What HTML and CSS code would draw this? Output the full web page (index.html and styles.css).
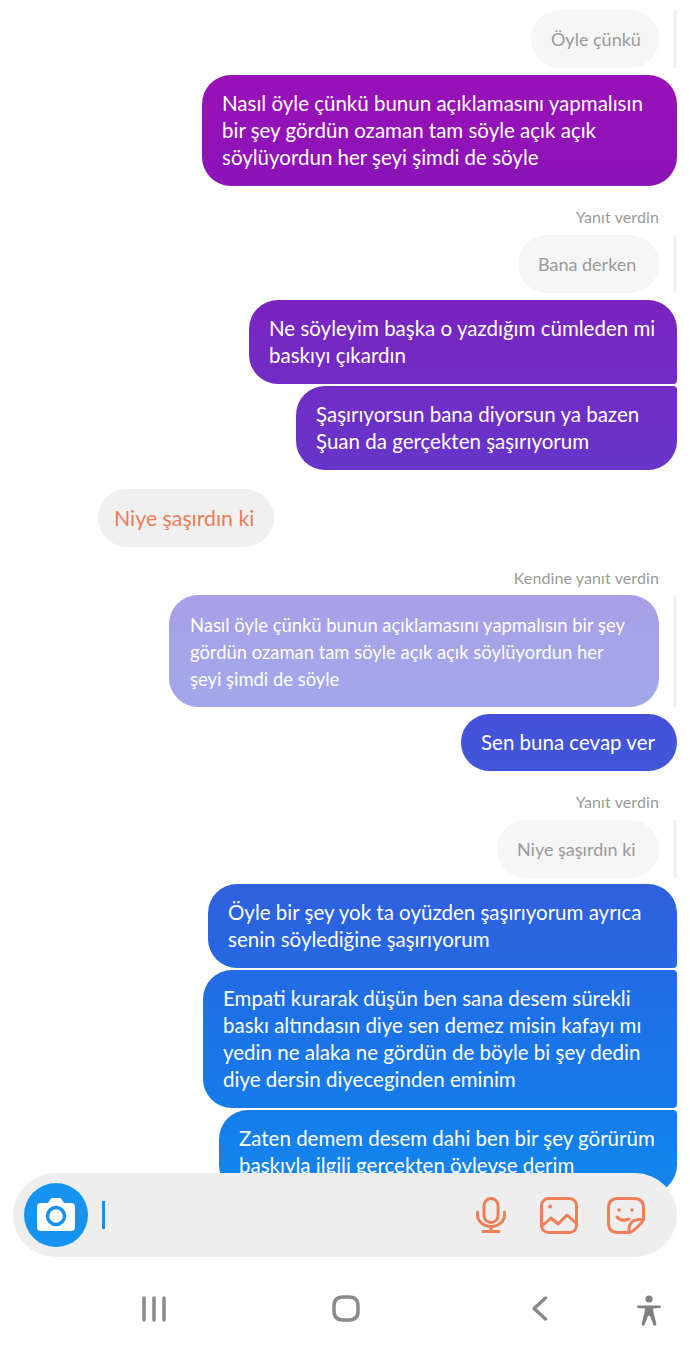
FILE: index.html
```html
<!DOCTYPE html>
<html lang="tr">
<head>
    <meta charset="UTF-8">
    <meta name="viewport" content="width=device-width, initial-scale=1.0">
    <title>Mesajlar</title>
    <link rel="stylesheet" href="styles.css">
</head>
<body>
<div class="screen">
    <div class="chat">
        <div class="quote first">
            <div class="bubble reply w-128">Öyle çünkü</div>
            <span class="bar"></span>
        </div>
        <div class="bubble sent gap w-475">Nasıl öyle çünkü bunun açıklamasını yapmalısın<br>bir şey gördün ozaman tam söyle açık açık<br>söylüyordun her şeyi şimdi de söyle</div>

        <div class="label">Yanıt verdin</div>
        <div class="quote">
            <div class="bubble reply w-141">Bana derken</div>
            <span class="bar"></span>
        </div>
        <div class="bubble sent gap has-next w-428">Ne söyleyim başka o yazdığım cümleden mi<br>baskıyı çıkardın</div>
        <div class="bubble sent tight w-381">Şaşırıyorsun bana diyorsun ya bazen<br>Şuan da gerçekten şaşırıyorum</div>

        <div class="bubble received w-176">Niye şaşırdın ki</div>

        <div class="label self-label">Kendine yanıt verdin</div>
        <div class="quote">
            <div class="bubble self w-490">Nasıl öyle çünkü bunun açıklamasını yapmalısın bir şey<br>gördün ozaman tam söyle açık açık söylüyordun her<br>şeyi şimdi de söyle</div>
            <span class="bar"></span>
        </div>
        <div class="bubble sent gap w-216">Sen buna cevap ver</div>

        <div class="label">Yanıt verdin</div>
        <div class="quote">
            <div class="bubble reply w-162">Niye şaşırdın ki</div>
            <span class="bar"></span>
        </div>
        <div class="bubble sent gap-small has-next w-469">Öyle bir şey yok ta oyüzden şaşırıyorum ayrıca<br>senin söylediğine şaşırıyorum</div>
        <div class="bubble sent tight has-next w-474">Empati kurarak düşün ben sana desem sürekli<br>baskı altındasın diye sen demez misin kafayı mı<br>yedin ne alaka ne gördün de böyle bi şey dedin<br>diye dersin diyeceginden eminim</div>
        <div class="bubble sent tight w-458">Zaten demem desem dahi ben bir şey görürüm<br>baskıyla ilgili gerçekten öylevse derim</div>
    </div>

    <div class="composer">
        <div class="camera">
            <svg width="40" height="34" viewBox="0 0 40 34">
                <path fill="#fff" d="M5 5h7l2.500-4q.6-1 2-1h7q1.400 0 2 1L28 5h7q4 0 4 4v20q0 4-4 4H5q-4 0-4-4V9q0-4 4-4z"/>
                <circle cx="20" cy="18" r="8.500" fill="none" stroke="#1593ee" stroke-width="3.500"/>
            </svg>
        </div>
        <span class="cursor"></span>
        <div class="tools">
            <svg class="mic" width="30" height="36" viewBox="0 0 30 36">
                <rect x="8" y="1.500" width="14" height="24" rx="7"/>
                <path d="M1.500 15v3a13.500 11.500 0 0 0 27 0v-3M15 29.500v5M7 34.500h16"/>
            </svg>
            <svg class="gallery" width="38" height="37" viewBox="0 0 38 37">
                <rect x="1.500" y="1.500" width="35" height="34" rx="7"/>
                <circle cx="10" cy="9.500" r="2" class="dot"/>
                <path d="M2 29l9-8 7 6 9-9 9 8"/>
            </svg>
            <svg class="sticker" width="38" height="37" viewBox="0 0 38 37">
                <path d="M22 35.500H11q-9.500 0-9.500-9.500V11q0-9.500 9.500-9.500h16q9.500 0 9.500 9.500v10q0 3-2 5l-8 7.500q-2 2-5 2z"/>
                <path d="M22 35.500v-3q0-9 9-10h5.500"/>
                <path d="M10 20q4 5 12 2"/>
                <circle cx="12" cy="13" r="1.800" class="dot"/>
                <circle cx="25" cy="13" r="1.800" class="dot"/>
            </svg>
        </div>
    </div>

    <div class="navbar">
        <svg class="nav-icon" width="24" height="27" viewBox="0 0 24 27">
            <path d="M2 3v22M12 3v22M22 3v22"/>
        </svg>
        <svg class="nav-icon" width="28" height="27" viewBox="0 0 28 27">
            <path d="M11 2h6q9 0 9 9v5q0 9-9 9h-6q-9 0-9-9v-5q0-9 9-9z"/>
        </svg>
        <svg class="nav-icon" width="17" height="27" viewBox="0 0 17 27">
            <path d="M14.500 3L3 13.500 14.500 24"/>
        </svg>
        <svg class="person" width="26" height="32" viewBox="0 0 26 32">
            <circle cx="13" cy="4" r="3.600"/>
            <path d="M2.500 10.500h21q1.500 0 1.500 1.200t-1.500 1.300l-6.500.6.500 3.900 2.800 11q.4 2-1.100 2.300t-2-1.500L14 21h-2l-3.200 8.300q-.5 1.800-2 1.500t-1.100-2.300l2.800-11 .5-3.900-6.500-.6Q1 13 1 11.700t1.500-1.200z"/>
        </svg>
    </div>
</div>
</body>
</html>
```

FILE: styles.css
```css
body{
    margin: 0;
    background: #fff;
    font-family: Lato, 'Noto Sans', sans-serif;
}
.screen{
    position: relative;
    width: 690px;
    height: 1351px;
    overflow: hidden;
}
.chat{
    height: 1215px;
    overflow: hidden;
    padding-right: 13px;
    display: flex;
    flex-direction: column;
    align-items: flex-end;
    box-sizing: border-box;
}
.quote{
    display: flex;
    gap: 14px;
}
.quote.first{
    margin-top: 10px;
}
.bar{
    width: 4px;
    background: #f2f2f2;
}
.bubble{
    box-sizing: border-box;
    flex-shrink: 0;
    padding: 15px 20px;
    border-radius: 29px;
    font-size: 20.5px;
    line-height: 27px;
    white-space: nowrap;
}
.sent{
    color: #fff;
    background: linear-gradient(180deg, #9a10b8 70px, #8a14b8 190px, #7628c2 340px, #6a32c8 440px, #4353da 740px, #2b63e0 920px, #1a74e8 1040px, #1284ee 1170px) fixed;
}
.reply{
    color: #9a9a9a;
    background: #f6f6f6;
    padding-top: 16px;
    font-size: 18px;
}
.received{
    align-self: flex-start;
    margin: 19px 0 0 98px;
    padding-left: 16px;
    padding-top: 16px;
    color: #ea7d56;
    background: #f0f0f0;
    font-size: 21.300px;
}
.self{
    padding: 17px 21px 14px;
    color: #fff;
    background: linear-gradient(180deg, #a89fe6, #a2a8ea);
    font-size: 18.400px;
}
.gap{
    margin-top: 7px;
}
.gap-small{
    margin-top: 6px;
}
.tight{
    margin-top: 2px;
    border-top-right-radius: 4px;
}
.has-next{
    border-bottom-right-radius: 4px;
}
.label{
    margin: 22px 18px 9px 0;
    font-size: 16px;
    line-height: 18px;
    color: #9a9a9a;
    letter-spacing: .1px;
}
.self-label{
    margin-bottom: 8px;
}
.w-128{ width: 128px; }
.w-141{ width: 141px; }
.w-162{ width: 162px; }
.w-176{ width: 176px; }
.w-216{ width: 216px; }
.w-381{ width: 381px; }
.w-428{ width: 428px; }
.w-458{ width: 458px; }
.w-469{ width: 469px; }
.w-474{ width: 474px; }
.w-475{ width: 475px; }
.w-490{ width: 490px; }

/* alttaki yazma alani, mesajlarin ustune biniyor */
.composer{
    position: absolute;
    top: 1173px;
    left: 13px;
    width: 664px;
    height: 84px;
    box-sizing: border-box;
    padding: 0 32px 0 11px;
    display: flex;
    align-items: center;
    background: #eee;
    border-radius: 42px;
}
.camera{
    width: 64px;
    height: 64px;
    border-radius: 50%;
    background: #1593ee;
    display: flex;
    align-items: center;
    justify-content: center;
}
.cursor{
    width: 3px;
    height: 28px;
    margin-left: 14px;
    background: #1a8cea;
}
.tools{
    margin-left: auto;
    display: flex;
    align-items: center;
}
.tools svg{
    fill: none;
    stroke: #ee8059;
    stroke-width: 3;
    stroke-linecap: round;
    stroke-linejoin: round;
}
.tools .mic{
    margin-right: 34px;
}
.tools .gallery{
    margin-right: 29px;
}
.tools .dot{
    fill: #ee8059;
    stroke: none;
}
.navbar{
    margin-top: 80px;
    padding-left: 142px;
    display: grid;
    grid-template-columns: 190px 199px 105px auto;
    align-items: start;
}
.nav-icon{
    fill: none;
    stroke: #8a8a8a;
    stroke-width: 3.5;
    stroke-linecap: round;
    stroke-linejoin: round;
}
.person{
    fill: #808080;
}
```
